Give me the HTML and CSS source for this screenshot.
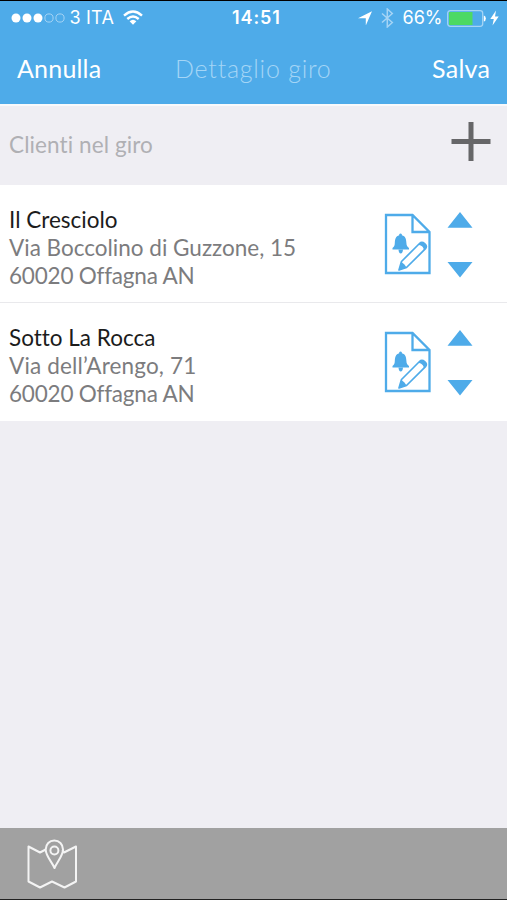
FILE: index.html
```html
<!DOCTYPE html>
<html lang="it">
<head>
<meta charset="utf-8">
<title>Dettaglio giro</title>
<link rel="stylesheet" href="styles.css">
</head>
<body>
<svg width="0" height="0" class="defs">
  <symbol id="note" viewBox="0 0 48 62">
    <path d="M2 2H28.500L45.500 19V60H2Z M28.500 2V19H45.500" fill="none" stroke="currentColor" stroke-width="2.300"/>
    <path d="M16.500 20.500C17.600 20.500 18 21.300 17.900 22.300C21.500 23.300 22.200 26 22.400 30C22.500 32.500 23.300 33.500 25 35V36.500H8.500V35C10.200 33.500 10.700 32.500 10.800 30C11 26 11.800 23.300 15.200 22.300C15.100 21.300 15.500 20.500 16.500 20.500Z" fill="currentColor"/>
    <path d="M14.500 36.500H19C18.800 39.500 18 40.400 16.700 40.400C15.500 40.400 14.700 39.500 14.500 36.500Z" fill="currentColor"/>
    <path d="M15 57L17.500 48.500L35.500 30.500C38.500 27.500 44.300 32 41.500 35.700L22.500 54.500Z" fill="#fff" stroke="currentColor" stroke-width="1.700" stroke-linejoin="round"/>
    <path d="M15 57L17.500 48.500C18.500 50.500 20.500 50.500 22.500 54.500ZM33.800 32L35.500 30.500C38.500 27.500 44.300 32 41.500 35.700L39.800 37.500C40 34 37 32 33.800 32Z" fill="currentColor"/>
  </symbol>
</svg>
<div class="screen">
  <header class="top">
    <div class="status">
      <svg class="signal" width="54" height="12" viewBox="0 0 54 12"><g fill="#fff"><circle cx="5" cy="6" r="4.500"/><circle cx="16" cy="6" r="4.500"/><circle cx="27" cy="6" r="4.500"/></g><g fill="none" stroke="#a5d4f5" stroke-width="1"><circle cx="38" cy="6" r="4.100"/><circle cx="49" cy="6" r="4.100"/></g></svg>
      <span class="carrier">3 ITA</span>
      <svg class="wifi" width="20" height="16" viewBox="0 0 20 16"><g fill="none" stroke="#fff" stroke-width="2.400"><path d="M1 5.700Q10-2.500 19 5.700"/><path d="M4.300 9Q10 3.900 15.700 9"/></g><path d="M6.600 11.300Q10 8.200 13.400 11.300L10 14.800Z" fill="#fff"/></svg>
      <span class="clock">14:51</span>
      <svg class="locate" width="14" height="14" viewBox="0 0 14 14"><path d="M14 .2L7.800 14.500V7.300H0Z" fill="#fff"/></svg>
      <svg class="bluetooth" width="13" height="20" viewBox="0 0 13 20"><path d="M1 5.500L11.300 14.500L6.300 19V1L11.300 5.500L1 14.500" fill="none" stroke="#a5d4f5" stroke-width="1.500"/></svg>
      <span class="percent">66%</span>
      <svg class="battery" width="40" height="17" viewBox="0 0 40 17"><rect x=".7" y=".7" width="35" height="15.600" rx="2.500" fill="none" stroke="#a5d4f5" stroke-width="1.300"/><path d="M2 2H25.500V15H2Z" fill="#4cd964"/><path d="M36.800 5.500Q38.800 6 38.800 8.500T36.800 11.500Z" fill="#fff"/></svg>
      <svg class="bolt" width="9" height="16" viewBox="0 0 9 16"><path d="M6 .5L.3 9H3.800L2.500 15.500L8.700 6.500H5Z" fill="#fff"/></svg>
    </div>
    <nav class="nav">
      <span class="cancel">Annulla</span>
      <span class="heading">Dettaglio giro</span>
      <span class="save">Salva</span>
    </nav>
  </header>
  <section class="section-head">
    <span class="section-title">Clienti nel giro</span>
    <svg class="plus" width="40" height="40" viewBox="0 0 40 40"><path d="M.5 20.500H39.500M20 1V40" stroke="#666668" stroke-width="5"/></svg>
  </section>
  <main class="list">
    <article class="row">
      <div class="client">
        <div class="name">Il Cresciolo</div>
        <div class="street">Via Boccolino di Guzzone, 15</div>
        <div class="town">60020 Offagna AN</div>
      </div>
      <svg class="note" width="48" height="62"><use href="#note"/></svg>
      <svg class="arrows" width="26" height="68" viewBox="0 0 26 68"><path d="M13 1L25.500 16.700H.5ZM.5 51H25.500L13 66.500Z" fill="currentColor"/></svg>
    </article>
    <article class="row">
      <div class="client">
        <div class="name">Sotto La Rocca</div>
        <div class="street arengo">Via dell’Arengo, 71</div>
        <div class="town">60020 Offagna AN</div>
      </div>
      <svg class="note" width="48" height="62"><use href="#note"/></svg>
      <svg class="arrows" width="26" height="68" viewBox="0 0 26 68"><path d="M13 1L25.500 16.700H.5ZM.5 51H25.500L13 66.500Z" fill="currentColor"/></svg>
    </article>
  </main>
  <footer class="toolbar">
    <svg width="52" height="52" viewBox="0 0 52 52"><g fill="none" stroke="#f4f4f4" stroke-width="2" stroke-linejoin="round"><path d="M19.700 10.500L14 13.500L2.500 7.500V42.500L14 48.500L26 42.500L38.500 48.500L50 42.500V7.500L38 13.500L36.500 11"/><path d="M28.500 29C26 23 19.700 17 19.700 10.500C19.700 5 23.500 1.500 28.300 1.500S37 5 37 10.500C37 17 31 23 28.500 29Z"/><circle cx="28.400" cy="11.500" r="4"/></g></svg>
  </footer>
</div>
</body>
</html>
```
FILE: styles.css
```css
* { box-sizing: border-box; }
body { margin: 0; font-family: Lato, "Liberation Sans", sans-serif; font-variant-ligatures: none; }
svg { display: block; flex: none; }
.defs { position: absolute; }
.screen {
  width: 507px;
  height: 900px;
  display: flex;
  flex-direction: column;
  background: #efeef3;
  border-top: 1px solid #000;
  border-bottom: 1px solid #222;
  overflow: hidden;
  white-space: nowrap;
}
.top { height: 105px; flex: none; background: #4eabe9; color: #fff; border-bottom: 2px solid #f8f9fb; }
.status {
  height: 34px;
  display: flex;
  align-items: center;
  font: 400 18px/36px Inter, "Liberation Sans", sans-serif;
}
.signal { margin-left: 11px; }
.carrier { width: 46px; margin-left: 4.5px; letter-spacing: .2px; }
.wifi { margin-left: 7px; }
.clock { width: 51px; margin-left: 89.5px; font-weight: 600; letter-spacing: .9px; }
.locate { margin-left: 74.5px; }
.bluetooth { margin-left: 9px; }
.percent { width: 40px; margin-left: 9px; }
.battery { margin-left: 4px; }
.bolt { margin-left: 3px; }
.nav {
  height: 67px;
  display: grid;
  grid-template-columns: 158px 1fr 91px;
  padding: 0 0 0 17px;
  font-size: 25px;
  line-height: 67px;
}
.cancel { letter-spacing: .2px; }
.save { padding-left: 16px; letter-spacing: .3px; }
.heading { color: #a4d5f6; font-weight: 300; letter-spacing: .75px; }
.section-head {
  height: 79px;
  flex: none;
  padding: 0 16px 2px 9px;
  display: flex;
  align-items: center;
  justify-content: space-between;
}
.section-title { font-size: 22.5px; letter-spacing: .1px; color: #b0b0b4; }
.plus { margin-top: -8px; }
.row {
  height: 118px;
  display: flex;
  background: #fff;
  padding: 20.5px 34px 0 9px;
  font-size: 22.5px;
  line-height: 28.4px;
  color: #4eabe9;
  border-bottom: 1px solid #e9e9ec;
}
.row:last-child { border-bottom: 0; }
.client { width: 375px; }
.name { color: #1c1c1c; }
.street, .town { color: #7c7c7e; }
.arengo { letter-spacing: .15px; }
.town { letter-spacing: -.2px; }
.note { margin-top: 7.5px; }
.arrows { margin: 5.5px 0 0 15px; }
.toolbar { height: 71px; flex: none; margin-top: auto; background: #a1a1a1; padding: 11px 0 0 26px; }
```
